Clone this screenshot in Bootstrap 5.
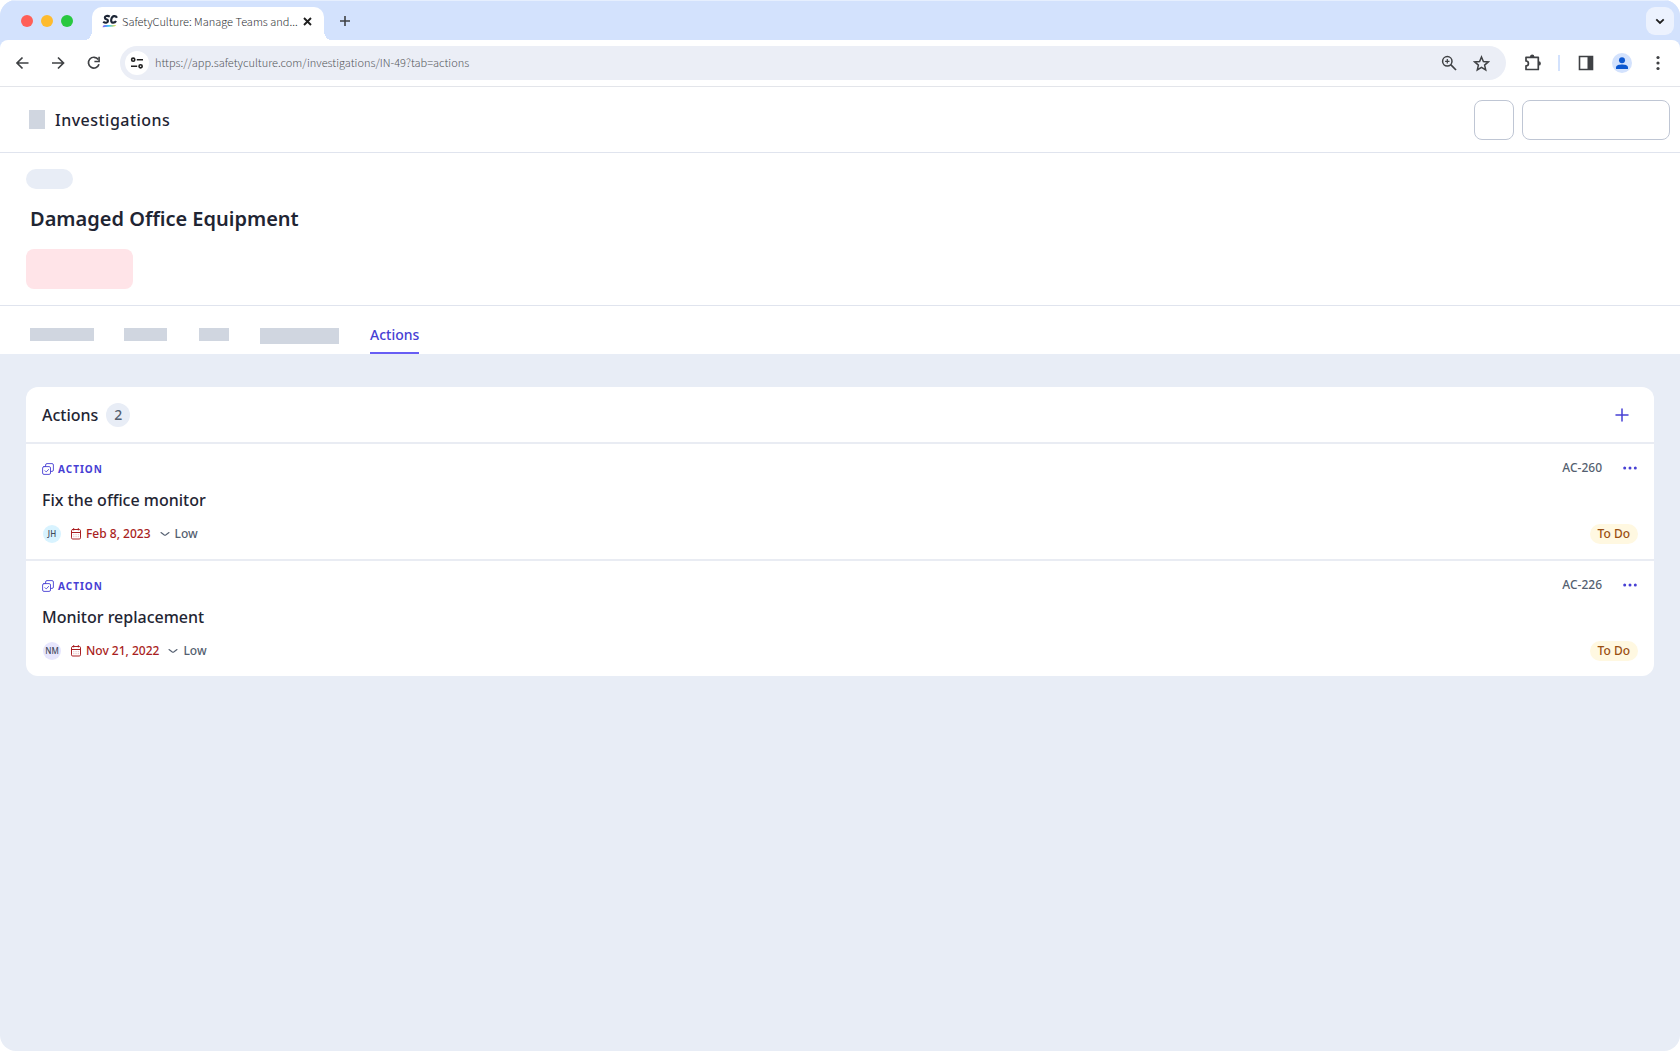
<!DOCTYPE html>
<html lang="en">
<head>
<meta charset="utf-8">
<meta name="viewport" content="width=device-width, initial-scale=1">
<title>SafetyCulture: Investigations</title>
<link href="https://cdn.jsdelivr.net/npm/bootstrap@5.3.0/dist/css/bootstrap.min.css" rel="stylesheet">
<style>
  body { font-family: "Noto Sans", sans-serif; color: #1f2533; background: #fff; }
  svg { display: block; flex: none; }
  button, a { flex: none; }
  .plain-btn { background: none; border: 0; padding: 0; color: inherit; display: flex; align-items: center; justify-content: center; }
  .window-frame { min-height: 100vh; background: #e8edf6; border-radius: 16px; overflow: hidden; }
  .chrome-font, .url-input { font-family: "Noto Sans CJK SC", sans-serif; font-size: 11px; font-weight: 300; }

  .tab-strip { height: 40px; background: #d3e2fd; padding: 6px 6px 0 21px; border-top: 1px solid #e6effe; }
  .light-dot { width: 12px; height: 12px; border-radius: 50%; }
  .browser-tab { position: relative; width: 232px; height: 34px; margin-left: 19px; padding: 0 12px 6px 10px; background: #fff; border-radius: 10px 10px 0 0; line-height: 16px; color: #303337; }
  .browser-tab::before, .browser-tab::after { content: ""; position: absolute; bottom: 0; width: 10px; height: 10px; }
  .browser-tab::before { right: 100%; background: radial-gradient(circle at 0 0, transparent 10px, #fff 10px); }
  .browser-tab::after { left: 100%; background: radial-gradient(circle at 100% 0, transparent 10px, #fff 10px); }
  .tab-menu { width: 28px; height: 28px; border-radius: 9px; background: #ecf2fe; color: #1f1f1f; }

  .toolbar-wrap { background: #d3e2fd; }
  .toolbar { height: 47px; background: #fff; border-radius: 8px 8px 0 0; border-bottom: 1px solid #e3e5ea; color: #3f4144; padding: 0 13px 0 14px; }
  .nav-buttons { gap: 20px; margin-right: 18px; }
  .omnibox { height: 34px; border-radius: 17px; background: #ebeef6; padding: 0 16px 0 5px; margin-right: 18px; }
  .site-info { width: 24px; height: 24px; border-radius: 50%; background: #fff; color: #1f1f1f; }
  .url-input { border: 0; background: none; outline: 0; padding: 0 0 2px; margin-left: 6px; color: #55575c; height: 24px; min-width: 0; }
  .profile { width: 20px; height: 20px; border-radius: 50%; background: #d3e2fd; margin-right: 17px; }
  .bar-sep { width: 2px; height: 16px; background: #d3e2fd; }

  .rule-below { border-bottom: 1px solid #e0e4ee; }
  .app-head { height: 66px; background: #fff; padding: 0 10px 0 29px; }
  .app-head h1 { font-size: 16px; line-height: 24px; font-weight: 500; letter-spacing: .03em; margin: 0 auto 0 10px; }
  .ghost { background: #d0d6e0; flex: none; }
  .outline-btn { height: 40px; border: 1px solid #bfc6d4; border-radius: 8px; background: #fff; }
  .hero { background: #fff; padding: 16px 26px; }
  .hero-pill { width: 47px; height: 20px; border-radius: 10px; background: #e8edf6; }
  .hero h2 { font-size: 20px; line-height: 28px; font-weight: 600; margin: 0 4px; padding: 16px 0; }
  .hero-btn { display: block; width: 107px; height: 40px; border: 0; border-radius: 8px; background: #ffe4e8; }
  .section-tabs { height: 48px; background: #fff; padding: 0 30px; }
  .section-tabs a { color: #4740d4; font-size: 14px; line-height: 20px; font-weight: 500; text-decoration: none; padding: 19px 0 7px; border-bottom: 2px solid #675df4; }
  .section-tabs .ghost { height: 13px; margin-top: 22px; }
  .section-tabs .ghost.tall { height: 16px; }

  .panel-area { padding: 33px 26px; }
  .panel { background: #fff; border-radius: 12px; }
  .panel-head { height: 55px; padding: 0 20px 0 16px; }
  .panel-head h3 { font-size: 16px; line-height: 24px; font-weight: 500; margin: 0; }
  .count { width: 24px; height: 24px; border-radius: 50%; background: #e8edf6; color: #545f70; font-size: 14px; line-height: 24px; font-weight: 500; text-align: center; }
  .action-row { border-top: 2px solid #e9ecf3; padding: 14px 16px 15px; height: 117px; }
  .violet { color: #4740d4; }
  .kind { font-size: 10px; line-height: 22px; font-weight: 700; letter-spacing: 1px; color: #4740d4; }
  .action-row h4 { font-size: 16px; line-height: 24px; font-weight: 500; margin: 0; }
  .meta { font-size: 12px; line-height: 20px; font-weight: 500; color: #545f70; }
  .due { color: #a91e22; }
  .initials { width: 18px; height: 18px; margin: 0 9px 0 1px; border-radius: 50%; font-size: 8px; line-height: 18px; text-align: center; font-weight: 500; color: #3f495a; }
  .sky { background: #d8f3ff; }
  .lilac { background: #e7e6fd; }
  .row-tools { gap: 20px; }
  .todo { background: #fff8e1; color: #9a4f12; border-radius: 10px; padding: 0 8px; }
</style>
</head>
<body>
<svg class="d-none" aria-hidden="true">
  <symbol id="i-action" viewBox="0 0 12 12"><g fill="none" stroke="currentColor" stroke-width=".9" stroke-linecap="round" stroke-linejoin="round"><path d="M3.600 3.500V2A1.400 1.400 0 0 1 5 .6h5A1.400 1.400 0 0 1 11.400 2v5A1.400 1.400 0 0 1 10 8.400H8.600"/><rect x=".6" y="3.600" width="7.900" height="7.800" rx="1.400"/><path d="M3 7.700l1.200 1.200L6.600 6.500"/></g></symbol>
  <symbol id="i-cal" viewBox="0 0 12 12"><g fill="none" stroke="currentColor" stroke-linecap="round"><rect x="1.500" y="1.500" width="9" height="9.500" rx="1.200"/><path d="M1.500 4.500h9M3.700.5v1.500M8.300.5v1.500"/><path d="M3.800 6.700h.1M6 6.700h.1M8.200 6.700h.1M3.800 8.700h.1M6 8.700h.1M8.200 8.700h.1" stroke-width=".7" opacity=".6"/></g></symbol>
  <symbol id="i-low" viewBox="0 0 12 10"><path d="M2 3.500L5.300 6Q6 6.500 6.700 6L10 3.500" fill="none" stroke="currentColor" stroke-width="1.100" stroke-linecap="round"/></symbol>
  <symbol id="i-dots" viewBox="0 0 14 4"><g fill="currentColor"><circle cx="1.700" cy="2" r="1.500"/><circle cx="7" cy="2" r="1.500"/><circle cx="12.300" cy="2" r="1.500"/></g></symbol>
</svg>

<div class="window-frame">
  <header class="chrome-font">
    <div class="tab-strip d-flex align-items-start">
      <div class="d-flex gap-2 mt-2" aria-hidden="true">
        <span class="light-dot" style="background:#ff5f57"></span>
        <span class="light-dot" style="background:#febb2e"></span>
        <span class="light-dot" style="background:#28c840"></span>
      </div>
      <div class="browser-tab d-flex align-items-center">
        <svg width="16" height="14" viewBox="0 0 17 14" aria-hidden="true">
          <defs><linearGradient id="swoosh"><stop stop-color="#8b5cf6"/><stop offset=".45" stop-color="#3ec8f5"/><stop offset="1" stop-color="#ffe23f"/></linearGradient></defs>
          <path d="M8.300 2.400Q6.500 1.300 4.600 1.700C2.400 2.200 2.600 4.600 4.700 5.200C7 5.800 6.800 8.400 4.600 8.800Q2.700 9 1.300 7.800M15.900 3.500Q14.900 1.400 12.600 1.800C9.600 2.400 8.500 8.700 11.600 8.800Q13.800 8.900 14.900 7" fill="none" stroke="#1d2636" stroke-width="2.300"/>
          <path d="M.5 13.700Q1 11.200 3 11.200H15.300Q14 13.200 11 13.100Q5 12.700 .5 13.700" fill="url(#swoosh)"/>
        </svg>
        <span class="ms-1 text-nowrap flex-grow-1">SafetyCulture: Manage Teams and...</span>
        <button class="plain-btn" aria-label="Close tab"><svg width="9" height="9" viewBox="0 0 9 9"><path d="M1 1l7 7M8 1L1 8" stroke="#1f1f1f" stroke-width="1.900"/></svg></button>
      </div>
      <button class="plain-btn ms-3 mt-2" aria-label="New tab"><svg width="10" height="12" viewBox="0 0 10 12"><path d="M0 6h10M5 1v10" stroke="#3f4144" stroke-width="1.600"/></svg></button>
      <button class="plain-btn tab-menu ms-auto" aria-label="Search tabs"><svg width="10" height="7" viewBox="0 0 10 7"><path d="M1.300 1.300L5 5l3.700-3.700" fill="none" stroke="currentColor" stroke-width="1.800"/></svg></button>
    </div>
    <div class="toolbar-wrap">
      <div class="toolbar d-flex align-items-center">
        <div class="nav-buttons d-flex">
          <button class="plain-btn" aria-label="Back"><svg width="16" height="14" viewBox="0 0 16 14"><path d="M14.500 7H3M8.500 1.500L3 7l5.500 5.500" fill="none" stroke="currentColor" stroke-width="1.700"/></svg></button>
          <button class="plain-btn" aria-label="Forward"><svg width="16" height="14" viewBox="0 0 16 14"><path d="M2 7H13.500M8 1.500L13.500 7l-5.500 5.500" fill="none" stroke="currentColor" stroke-width="1.700"/></svg></button>
          <button class="plain-btn" aria-label="Reload"><svg width="16" height="16" viewBox="0 0 16 16"><path d="M13 9.300A5.400 5.400 0 1 1 12.300 4.600" fill="none" stroke="currentColor" stroke-width="1.700"/><path d="M13.900 1.800v5.500H8.400V5.700h3.900V1.800z" fill="currentColor"/></svg></button>
        </div>
        <div class="omnibox d-flex align-items-center flex-grow-1">
          <button class="plain-btn site-info" aria-label="Site information"><svg width="14" height="12" viewBox="0 0 14 12"><g fill="none" stroke="currentColor" stroke-width="1.600"><circle cx="3.200" cy="2.700" r="1.600"/><path d="M6.800 2.700h6.200M1 9.300h6.200"/><circle cx="10.600" cy="9.300" r="1.600"/></g></svg></button>
          <input class="url-input flex-grow-1" type="text" aria-label="Address" value="https://app.safetyculture.com/investigations/IN-49?tab=actions">
          <button class="plain-btn" aria-label="Zoom"><svg width="16" height="16" viewBox="0 0 16 16"><g fill="none" stroke="currentColor" stroke-width="1.500"><circle cx="6.300" cy="6.300" r="4.700"/><path d="M9.700 9.700L15 15" stroke-width="1.700"/><path d="M6.300 4.100v4.400M4.100 6.300h4.400" stroke-width="1.200"/></g></svg></button>
          <button class="plain-btn ms-3" aria-label="Bookmark"><svg width="17" height="17" viewBox="0 0 17 17"><path d="M8.500 2l1.900 4.500 4.900.4-3.700 3.200 1.100 4.800-4.200-2.600-4.200 2.600 1.100-4.800L1.700 6.900l4.900-.4z" fill="none" stroke="currentColor" stroke-width="1.500"/></svg></button>
        </div>
        <button class="plain-btn me-3" aria-label="Extensions"><svg width="18" height="18" viewBox="0 0 18 18"><path d="M2 3.300h12.300v12.200H2v-3.700a2.400 2.400 0 0 0 0-4.800z" fill="none" stroke="currentColor" stroke-width="1.700" stroke-linejoin="round"/><path d="M6 3.500V2.800a2.200 2.200 0 0 1 4.400 0v.7zM14 7.200h.7a2.200 2.200 0 0 1 0 4.400H14z" fill="currentColor"/></svg></button>
        <span class="bar-sep"></span>
        <button class="plain-btn ms-3 me-3" aria-label="Side panel"><svg width="20" height="16" viewBox="0 0 20 16"><path d="M3.500 1.500h13v13h-13z" fill="none" stroke="currentColor" stroke-width="1.600"/><path d="M11.500 1.500h5v13h-5z" fill="currentColor"/></svg></button>
        <button class="plain-btn profile" aria-label="Profile"><svg width="14" height="14" viewBox="0 0 14 14"><g fill="#0b57d0"><circle cx="7" cy="4.200" r="3"/><path d="M1 12.900v-1.500C1 9.200 4.500 8.500 7 8.500s6 .7 6 2.900v1.500z"/></g></svg></button>
        <button class="plain-btn" aria-label="Menu"><svg width="18" height="16" viewBox="0 0 18 16"><g fill="currentColor"><circle cx="9" cy="2.500" r="1.600"/><circle cx="9" cy="8" r="1.600"/><circle cx="9" cy="13.500" r="1.600"/></g></svg></button>
      </div>
    </div>
  </header>

  <main>
    <div class="app-head rule-below d-flex align-items-center">
      <span class="ghost" style="width:16px;height:19px"></span>
      <h1>Investigations</h1>
      <button class="outline-btn me-2" style="width:40px" aria-label="More options"></button>
      <button class="outline-btn" style="width:148px" aria-label="Report"></button>
    </div>
    <section class="hero rule-below">
      <div class="hero-pill"></div>
      <h2>Damaged Office Equipment</h2>
      <button class="hero-btn" aria-label="Status"></button>
    </section>
    <nav class="section-tabs d-flex align-items-start" aria-label="Sections">
      <span class="ghost" style="width:64px"></span>
      <span class="ghost" style="width:43px;margin-left:30px"></span>
      <span class="ghost" style="width:30px;margin-left:32px"></span>
      <span class="ghost tall" style="width:79px;margin-left:31px"></span>
      <a href="#actions" style="margin-left:31px" aria-current="page">Actions</a>
    </nav>

    <div class="panel-area">
      <section class="panel" id="actions">
        <div class="panel-head d-flex align-items-center">
          <h3>Actions</h3>
          <span class="count ms-2">2</span>
          <button class="plain-btn violet ms-auto p-1" aria-label="Add action"><svg width="16" height="16" viewBox="0 0 16 16"><path d="M2 8h12M8 2v12" stroke="currentColor" stroke-width="1.500" stroke-linecap="round"/></svg></button>
        </div>
        <article class="action-row d-flex justify-content-between">
          <div>
            <div class="kind d-flex align-items-center gap-1"><svg width="12" height="12"><use href="#i-action"/></svg>ACTION</div>
            <h4 class="mt-2">Fix the office monitor</h4>
            <div class="meta d-flex align-items-center mt-2 pt-1">
              <span class="initials sky">JH</span>
              <span class="due d-flex align-items-center gap-1"><svg width="12" height="12"><use href="#i-cal"/></svg>Feb 8, 2023</span>
              <span class="d-flex align-items-center gap-1 ms-2"><svg width="12" height="10"><use href="#i-low"/></svg>Low</span>
            </div>
          </div>
          <div class="meta d-flex flex-column justify-content-between align-items-end">
            <div class="row-tools d-flex align-items-center"><span>AC-260</span><button class="plain-btn violet" aria-label="Action options"><svg width="16" height="4"><use href="#i-dots"/></svg></button></div>
            <span class="todo">To Do</span>
          </div>
        </article>
        <article class="action-row d-flex justify-content-between">
          <div>
            <div class="kind d-flex align-items-center gap-1"><svg width="12" height="12"><use href="#i-action"/></svg>ACTION</div>
            <h4 class="mt-2">Monitor replacement</h4>
            <div class="meta d-flex align-items-center mt-2 pt-1">
              <span class="initials lilac">NM</span>
              <span class="due d-flex align-items-center gap-1"><svg width="12" height="12"><use href="#i-cal"/></svg>Nov 21, 2022</span>
              <span class="d-flex align-items-center gap-1 ms-2"><svg width="12" height="10"><use href="#i-low"/></svg>Low</span>
            </div>
          </div>
          <div class="meta d-flex flex-column justify-content-between align-items-end">
            <div class="row-tools d-flex align-items-center"><span>AC-226</span><button class="plain-btn violet" aria-label="Action options"><svg width="16" height="4"><use href="#i-dots"/></svg></button></div>
            <span class="todo">To Do</span>
          </div>
        </article>
      </section>
    </div>
  </main>
</div>
<script src="https://cdn.jsdelivr.net/npm/bootstrap@5.3.0/dist/js/bootstrap.bundle.min.js"></script>
</body>
</html>
